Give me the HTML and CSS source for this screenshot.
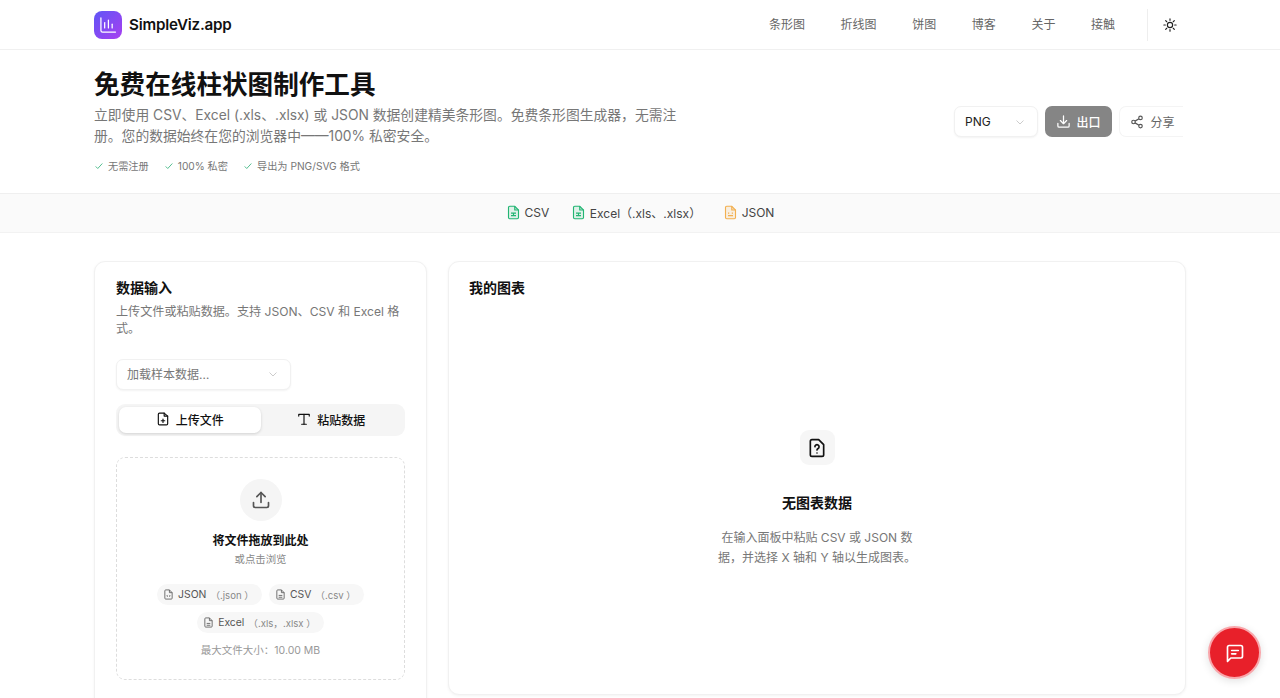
FILE: index.html
```html
<!DOCTYPE html>
<html lang="zh-CN">
<head>
    <meta charset="UTF-8">
    <meta name="viewport" content="width=device-width, initial-scale=1.0">
    <title>SimpleViz.app</title>
    <link rel="stylesheet" href="styles.css">
</head>
<body>
    <header class="site-header">
        <div class="wrap header-row">
            <a class="brand">
                <span class="brand-mark">
                    <svg width="20" height="20" viewBox="0 0 24 24" fill="none" stroke="#fff" stroke-width="1.5" stroke-linecap="round"><path d="M3.5 3.5v15a2 2 0 0 0 2 2h15.5"/><path d="M8 15.5V9"/><path d="M12.5 15.5V6"/><path d="M17 15.5v-4.500"/></svg>
                </span>
                <span class="brand-name">SimpleViz.app</span>
            </a>
            <nav class="nav">
                <a>条形图</a>
                <a>折线图</a>
                <a>饼图</a>
                <a>博客</a>
                <a>关于</a>
                <a>接触</a>
            </nav>
            <div class="theme-slot">
                <svg width="14" height="14" viewBox="0 0 24 24" fill="none" stroke="#222" stroke-width="2" stroke-linecap="round"><circle cx="12" cy="12" r="4.500"/><path d="M12 1.500v2.500M12 20v2.500M1.500 12H4M20 12h2.500M4.600 4.600l1.800 1.800M17.600 17.600l1.800 1.800M4.600 19.400l1.800-1.800M17.600 6.400l1.800-1.800"/></svg>
            </div>
        </div>
    </header>

    <section class="hero">
        <div class="wrap hero-row">
            <div class="hero-text">
                <h1>免费在线柱状图制作工具</h1>
                <p class="lead">立即使用 CSV、Excel (.xls、.xlsx) 或 JSON 数据创建精美条形图。免费条形图生成器，无需注册。您的数据始终在您的浏览器中——100% 私密安全。</p>
                <ul class="perks">
                    <li><svg class="check" viewBox="0 0 24 24"><path d="M4 13l5 5L20 6"/></svg>无需注册</li>
                    <li><svg class="check" viewBox="0 0 24 24"><path d="M4 13l5 5L20 6"/></svg>100% 私密</li>
                    <li><svg class="check" viewBox="0 0 24 24"><path d="M4 13l5 5L20 6"/></svg>导出为 PNG/SVG 格式</li>
                </ul>
            </div>
            <div class="hero-actions">
                <div class="select select-format">
                    <span>PNG</span>
                    <svg class="chev" viewBox="0 0 24 24"><path d="M5 9l7 7 7-7"/></svg>
                </div>
                <button class="btn-export">
                    <svg width="15" height="15" viewBox="0 0 24 24" fill="none" stroke="#fff" stroke-width="2" stroke-linecap="round" stroke-linejoin="round"><path d="M12 3v12"/><path d="M7 10.500l5 5 5-5"/><path d="M3 15v4a2 2 0 0 0 2 2h14a2 2 0 0 0 2-2v-4"/></svg>
                    出口
                </button>
                <button class="btn-share">
                    <svg width="14" height="14" viewBox="0 0 24 24" fill="none" stroke="#555" stroke-width="2"><circle cx="18" cy="5" r="3"/><circle cx="6" cy="12" r="3"/><circle cx="18" cy="19" r="3"/><path d="M8.600 13.500l6.800 4M15.400 6.500l-6.800 4"/></svg>
                    分享
                </button>
            </div>
        </div>
    </section>

    <div class="format-band">
        <span class="format">
            <svg class="sheet green" viewBox="0 0 24 24"><path d="M14 2H6a2 2 0 0 0-2 2v16a2 2 0 0 0 2 2h12a2 2 0 0 0 2-2V8z"/><path d="M14 2v6h6"/><path d="M8 13h8M8 17h8M12 13v4"/></svg>
            CSV
        </span>
        <span class="format">
            <svg class="sheet green" viewBox="0 0 24 24"><path d="M14 2H6a2 2 0 0 0-2 2v16a2 2 0 0 0 2 2h12a2 2 0 0 0 2-2V8z"/><path d="M14 2v6h6"/><path d="M8 13h8M8 17h8M12 13v4"/></svg>
            Excel（.xls、.xlsx）
        </span>
        <span class="format">
            <svg class="sheet orange" viewBox="0 0 24 24"><path d="M14 2H6a2 2 0 0 0-2 2v16a2 2 0 0 0 2 2h12a2 2 0 0 0 2-2V8z"/><path d="M14 2v6h6"/><path d="M8 13h2M8 17h8M14 13h2"/></svg>
            JSON
        </span>
    </div>

    <main class="wrap workspace">
        <section class="card input-card">
            <h2>数据输入</h2>
            <p class="card-desc">上传文件或粘贴数据。支持 JSON、CSV 和 Excel 格式。</p>

            <div class="select select-sample">
                <span>加载样本数据…</span>
                <svg class="chev" viewBox="0 0 24 24"><path d="M5 9l7 7 7-7"/></svg>
            </div>

            <div class="tabs">
                <div class="tab active">
                    <svg width="14" height="14" viewBox="0 0 24 24" fill="none" stroke="#111" stroke-width="2" stroke-linecap="round" stroke-linejoin="round"><path d="M14 2H6a2 2 0 0 0-2 2v16a2 2 0 0 0 2 2h12a2 2 0 0 0 2-2V7z"/><path d="M14 2v5h6"/><path d="M12 18v-6M9 15h6"/></svg>
                    上传文件
                </div>
                <div class="tab">
                    <svg width="14" height="14" viewBox="0 0 24 24" fill="none" stroke="#111" stroke-width="2" stroke-linecap="round" stroke-linejoin="round"><path d="M3 7V4h18v3"/><path d="M12 4v17"/><path d="M8 21h8"/></svg>
                    粘贴数据
                </div>
            </div>

            <div class="dropzone">
                <div class="upload-circle">
                    <svg width="20" height="20" viewBox="0 0 24 24" fill="none" stroke="#555" stroke-width="2" stroke-linecap="round" stroke-linejoin="round"><path d="M12 15V3"/><path d="M7 8l5-5 5 5"/><path d="M3 15v4a2 2 0 0 0 2 2h14a2 2 0 0 0 2-2v-4"/></svg>
                </div>
                <p class="drop-title">将文件拖放到此处</p>
                <p class="drop-sub">或点击浏览</p>
                <div class="chips">
                    <span class="chip"><svg class="chip-icon" viewBox="0 0 24 24"><path d="M14 2H6a2 2 0 0 0-2 2v16a2 2 0 0 0 2 2h12a2 2 0 0 0 2-2V8z"/><path d="M14 2v6h6"/><path d="M10 13l-1.500 2 1.500 2M14 13l1.500 2-1.500 2"/></svg>JSON<em>（.json ）</em></span>
                    <span class="chip"><svg class="chip-icon" viewBox="0 0 24 24"><path d="M14 2H6a2 2 0 0 0-2 2v16a2 2 0 0 0 2 2h12a2 2 0 0 0 2-2V8z"/><path d="M14 2v6h6"/><path d="M8 14h8M8 18h8"/></svg>CSV<em>（.csv ）</em></span>
                    <span class="chip"><svg class="chip-icon" viewBox="0 0 24 24"><path d="M14 2H6a2 2 0 0 0-2 2v16a2 2 0 0 0 2 2h12a2 2 0 0 0 2-2V8z"/><path d="M14 2v6h6"/><path d="M8 14h8M8 18h8"/></svg>Excel<em>（.xls，.xlsx ）</em></span>
                </div>
                <p class="drop-limit">最大文件大小：10.00 MB</p>
            </div>
        </section>

        <section class="card chart-card">
            <h2>我的图表</h2>
            <div class="empty">
                <div class="empty-icon">
                    <svg width="20" height="20" viewBox="0 0 24 24" fill="none" stroke="#111" stroke-width="2" stroke-linecap="round" stroke-linejoin="round"><path d="M14 2H6a2 2 0 0 0-2 2v16a2 2 0 0 0 2 2h12a2 2 0 0 0 2-2V8z"/><path d="M9.500 10.500a2.500 2.500 0 1 1 3.800 2.100c-.8.500-1.300 1-1.300 1.900"/><path d="M12 18h.01"/></svg>
                </div>
                <p class="empty-title">无图表数据</p>
                <p class="empty-desc">在输入面板中粘贴 CSV 或 JSON 数据，并选择 X 轴和 Y 轴以生成图表。</p>
            </div>
        </section>
    </main>

    <button class="chat-btn">
        <svg width="20" height="20" viewBox="0 0 24 24" fill="none" stroke="#fff" stroke-width="2" stroke-linecap="round" stroke-linejoin="round"><path d="M3 5a2 2 0 0 1 2-2h14a2 2 0 0 1 2 2v11a2 2 0 0 1-2 2H7l-4 4z"/><path d="M8 9h8M8 13h5"/></svg>
    </button>
</body>
</html>
```

FILE: styles.css
```css
* {
    margin: 0;
    padding: 0;
    box-sizing: border-box;
}

html, body {
    height: 698px;
    overflow: hidden;
}

body {
    background: #fff;
    color: #111;
    font-family: Inter, "Noto Sans CJK SC", sans-serif;
}

.wrap {
    width: 1092px;
    margin: 0 auto;
}


.site-header {
    height: 50px;
    border-bottom: 1px solid #f0f0f0;
}

.header-row {
    height: 49px;
    display: flex;
    align-items: center;
}

.brand {
    display: flex;
    align-items: center;
    gap: 7px;
}

.brand-mark {
    width: 28px;
    height: 28px;
    border-radius: 8px;
    background: linear-gradient(135deg, #5f55f6, #a83ff0);
    display: flex;
    align-items: center;
    justify-content: center;
}

.brand-name {
    font-size: 15.2px;
    font-weight: 600;
    letter-spacing: -0.2px;
}

.nav {
    margin-left: auto;
    display: flex;
    gap: 35.6px;
    font-size: 12px;
    color: #666;
    padding-bottom: 2px;
}

.theme-slot {
    margin-left: 32px;
    width: 39px;
    height: 32px;
    border-left: 1px solid #eee;
    display: flex;
    align-items: center;
    justify-content: flex-end;
    padding-right: 9px;
}


.hero {
    height: 143px;
}

.hero-row {
    display: flex;
    justify-content: space-between;
    align-items: flex-start;
    height: 100%;
    padding-top: 19px;
}

.hero-text {
    width: 600px;
}

h1 {
    font-size: 25.6px;
    line-height: 32px;
    font-weight: 700;
}

.lead {
    font-size: 13.8px;
    line-height: 21px;
    color: #777;
    margin-top: 4px;
    width: 590px;
}

.perks {
    list-style: none;
    display: flex;
    gap: 15px;
    margin-top: 11px;
    font-size: 10.2px;
    line-height: 16px;
    color: #777;
}

.perks li {
    display: flex;
    align-items: center;
    gap: 4px;
}

.check {
    width: 10px;
    height: 10px;
    fill: none;
    stroke: #34b27b;
    stroke-width: 2;
}

.hero-actions {
    display: flex;
    align-items: center;
    gap: 7px;
    margin-top: 37px;
    margin-right: 3px;
}

.select {
    display: flex;
    align-items: center;
    justify-content: space-between;
    background: #fff;
    border: 1px solid #f1f1f1;
    border-radius: 7px;
    box-shadow: 0 1px 2px rgba(0, 0, 0, 0.05);
}

.select-format {
    width: 84px;
    height: 31px;
    padding: 0 11px 0 10px;
    font-size: 12px;
    color: #222;
}

.chev {
    width: 12px;
    height: 12px;
    fill: none;
    stroke: #bbb;
    stroke-width: 1.5;
}

.btn-export {
    width: 67px;
    height: 31px;
    border: none;
    border-radius: 7px;
    background: #858585;
    color: #fff;
    font-family: inherit;
    font-size: 12px;
    font-weight: 500;
    display: flex;
    align-items: center;
    justify-content: center;
    gap: 5px;
}

.btn-share {
    width: 64px;
    height: 31px;
    border: 1px solid #f4f4f4;
    border-right: none;
    border-radius: 7px 0 0 7px;
    background: #fff;
    color: #666;
    font-family: inherit;
    font-size: 12px;
    display: flex;
    align-items: center;
    justify-content: center;
    gap: 6px;
    padding-left: 2px;
}


.format-band {
    height: 40px;
    background: #fafafa;
    border-top: 1px solid #efefef;
    border-bottom: 1px solid #f2f2f2;
    display: flex;
    justify-content: center;
    align-items: center;
    gap: 21.5px;
    font-size: 12px;
    color: #444;
    padding-bottom: 2px;
}

.format {
    display: flex;
    align-items: center;
    gap: 4px;
}

.sheet {
    width: 15px;
    height: 15px;
    fill: none;
    stroke-width: 1.8;
}

.sheet.green {
    stroke: #22b573;
    fill: rgba(34, 181, 115, 0.12);
}

.sheet.orange {
    stroke: #f2b050;
    fill: rgba(242, 176, 80, 0.15);
}


.workspace {
    display: flex;
    gap: 21px;
    padding-top: 28px;
    align-items: flex-start;
}

.card {
    background: #fff;
    border: 1px solid #f1f1f1;
    border-radius: 11px;
    box-shadow: 0 1px 3px rgba(0, 0, 0, 0.05);
    padding: 16px 20px;
}

.card h2 {
    font-size: 14px;
    line-height: 20px;
    font-weight: 600;
}

.input-card {
    width: 333px;
    height: 460px;
    flex-shrink: 0;
    padding-left: 21px;
    padding-right: 21px;
}

.card-desc {
    font-size: 12.1px;
    line-height: 17px;
    color: #777;
    margin-top: 5px;
}

.select-sample {
    width: 175px;
    height: 31px;
    padding: 0 11px 2px 10px;
    margin-top: 22px;
    font-size: 12px;
    color: #777;
}

.tabs {
    display: flex;
    height: 32px;
    margin-top: 14px;
    padding: 3px;
    background: #f5f5f5;
    border-radius: 9px;
}

.tab {
    flex: 1;
    display: flex;
    align-items: center;
    justify-content: center;
    gap: 6px;
    font-size: 12px;
    font-weight: 500;
    border-radius: 7px;
    padding-bottom: 2px;
}

.tab.active {
    background: #fff;
    box-shadow: 0 1px 3px rgba(0, 0, 0, 0.15);
}

.dropzone {
    height: 223px;
    margin-top: 21px;
    border: 1px dashed #ddd;
    border-radius: 9px;
    display: flex;
    flex-direction: column;
    align-items: center;
    padding-top: 21px;
}

.upload-circle {
    width: 42px;
    height: 42px;
    border-radius: 50%;
    background: #f5f5f5;
    display: flex;
    align-items: center;
    justify-content: center;
}

.drop-title {
    margin-top: 11px;
    font-size: 12px;
    line-height: 18px;
    font-weight: 600;
}

.drop-sub {
    font-size: 10.4px;
    line-height: 16px;
    color: #888;
    margin-top: 2px;
}

.chips {
    display: flex;
    flex-wrap: wrap;
    justify-content: center;
    gap: 7px;
    margin-top: 16px;
    width: 240px;
}

.chip {
    height: 21px;
    padding: 0 8px 0 6px;
    border-radius: 11px;
    background: #f7f7f7;
    display: flex;
    align-items: center;
    gap: 4px;
    font-size: 10.4px;
    color: #555;
}

.chip em {
    font-style: normal;
    font-size: 9.6px;
    color: #888;
    white-space: pre;
}

.chip-icon {
    width: 11px;
    height: 11px;
    fill: none;
    stroke: #666;
    stroke-width: 2;
}

.drop-limit {
    margin-top: 10px;
    font-size: 10.5px;
    line-height: 16px;
    color: #999;
}

.chart-card {
    flex: 1;
    height: 434px;
    display: flex;
    flex-direction: column;
}

.empty {
    flex: 1;
    display: flex;
    flex-direction: column;
    align-items: center;
    padding-top: 132px;
}

.empty-icon {
    width: 35px;
    height: 35px;
    border-radius: 9px;
    background: #f6f6f6;
    display: flex;
    align-items: center;
    justify-content: center;
}

.empty-title {
    margin-top: 28px;
    font-size: 14px;
    line-height: 20px;
    font-weight: 600;
}

.empty-desc {
    width: 200px;
    margin-top: 15px;
    font-size: 12px;
    line-height: 20px;
    color: #777;
    text-align: center;
}


.chat-btn {
    position: fixed;
    left: 1208px;
    top: 626px;
    width: 53px;
    height: 53px;
    border: 2px solid #f9a6ab;
    border-radius: 50%;
    background: #e8202a;
    display: flex;
    align-items: center;
    justify-content: center;
    box-shadow: 0 2px 8px rgba(0, 0, 0, 0.12);
}
```
